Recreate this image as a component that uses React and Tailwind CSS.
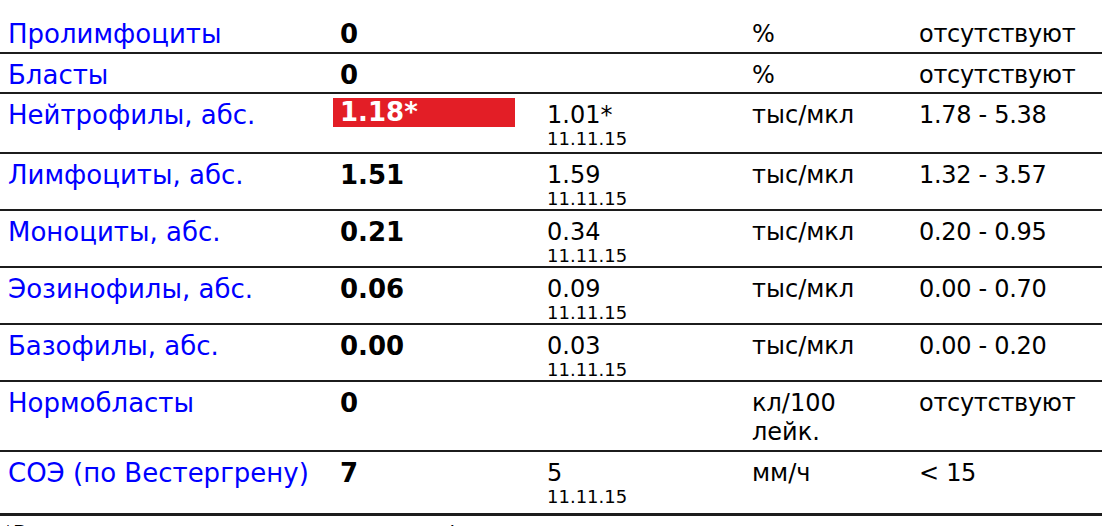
import React from 'react';

const rows = [
  { name: 'Пролимфоциты', value: '0', unit: '%', ref: 'отсутствуют', h: 'h-[40px]' },
  { name: 'Бласты', value: '0', unit: '%', ref: 'отсутствуют', h: 'h-[40px]' },
  { name: 'Нейтрофилы, абс.', value: '1.18*', flag: true, prev: '1.01*', date: '11.11.15', unit: 'тыс/мкл', ref: '1.78 - 5.38', h: 'h-[60px]' },
  { name: 'Лимфоциты, абс.', value: '1.51', prev: '1.59', date: '11.11.15', unit: 'тыс/мкл', ref: '1.32 - 3.57', h: 'h-[57px]' },
  { name: 'Моноциты, абс.', value: '0.21', prev: '0.34', date: '11.11.15', unit: 'тыс/мкл', ref: '0.20 - 0.95', h: 'h-[57px]' },
  { name: 'Эозинофилы, абс.', value: '0.06', prev: '0.09', date: '11.11.15', unit: 'тыс/мкл', ref: '0.00 - 0.70', h: 'h-[57px]' },
  { name: 'Базофилы, абс.', value: '0.00', prev: '0.03', date: '11.11.15', unit: 'тыс/мкл', ref: '0.00 - 0.20', h: 'h-[57px]' },
  { name: 'Нормобласты', value: '0', unit: 'кл/100 лейк.', ref: 'отсутствуют', h: 'h-[70px]' },
  { name: 'СОЭ (по Вестергрену)', value: '7', prev: '5', date: '11.11.15', unit: 'мм/ч', ref: '< 15', h: 'h-[63px]', last: true },
];

function Row({ r }) {
  const border = r.last ? 'border-b-[3px]' : 'border-b-2';
  const cell = `align-top ${border} border-[#1c1c1c] p-0`;
  return (
    <tr className={r.h}>
      <td className={cell}>
        <div className="pl-2 pt-[7px] text-[26px] leading-[28px] text-[#0000ff] whitespace-nowrap">{r.name}</div>
      </td>
      <td className={cell}>
        {r.flag ? (
          <div className="mt-[4px] w-[182px] h-[29px] bg-[#e31e26] pl-[7px] text-[26px] font-bold text-white leading-[29px]">
            {r.value}
          </div>
        ) : (
          <div className="pl-[7px] pt-[7px] text-[26px] font-bold">{r.value}</div>
        )}
      </td>
      <td className={cell}>
        {r.prev && (
          <div className="pl-[7px] pt-[7px]">
            <div>{r.prev}</div>
            <div className="text-[18px] leading-[20px]">{r.date}</div>
          </div>
        )}
      </td>
      <td className={cell}>
        <div className="pl-[7px] pt-[7px] pr-4 leading-[29px]">{r.unit}</div>
      </td>
      <td className={cell}>
        <div className="pl-[7px] pt-[7px] whitespace-nowrap tracking-[-0.3px]">{r.ref}</div>
      </td>
    </tr>
  );
}

export default function App() {
  return (
    <div
      className="w-[1102px] h-[526px] overflow-hidden bg-white pt-[13px] text-[24px] leading-[28px] text-black"
      style={{ fontFamily: '"DejaVu Sans", Verdana, sans-serif' }}
    >
      <table className="w-[1102px] table-fixed border-collapse">
        <colgroup>
          <col className="w-[333px]" />
          <col className="w-[207px]" />
          <col className="w-[205px]" />
          <col className="w-[167px]" />
          <col />
        </colgroup>
        <tbody>
          {rows.map((r) => (
            <Row key={r.name} r={r} />
          ))}
        </tbody>
      </table>
      <div className="pl-[3px] pt-[4px] text-[20px] leading-[24px]">
        *Выделенные значения находятся вне референсного интервала
      </div>
    </div>
  );
}
